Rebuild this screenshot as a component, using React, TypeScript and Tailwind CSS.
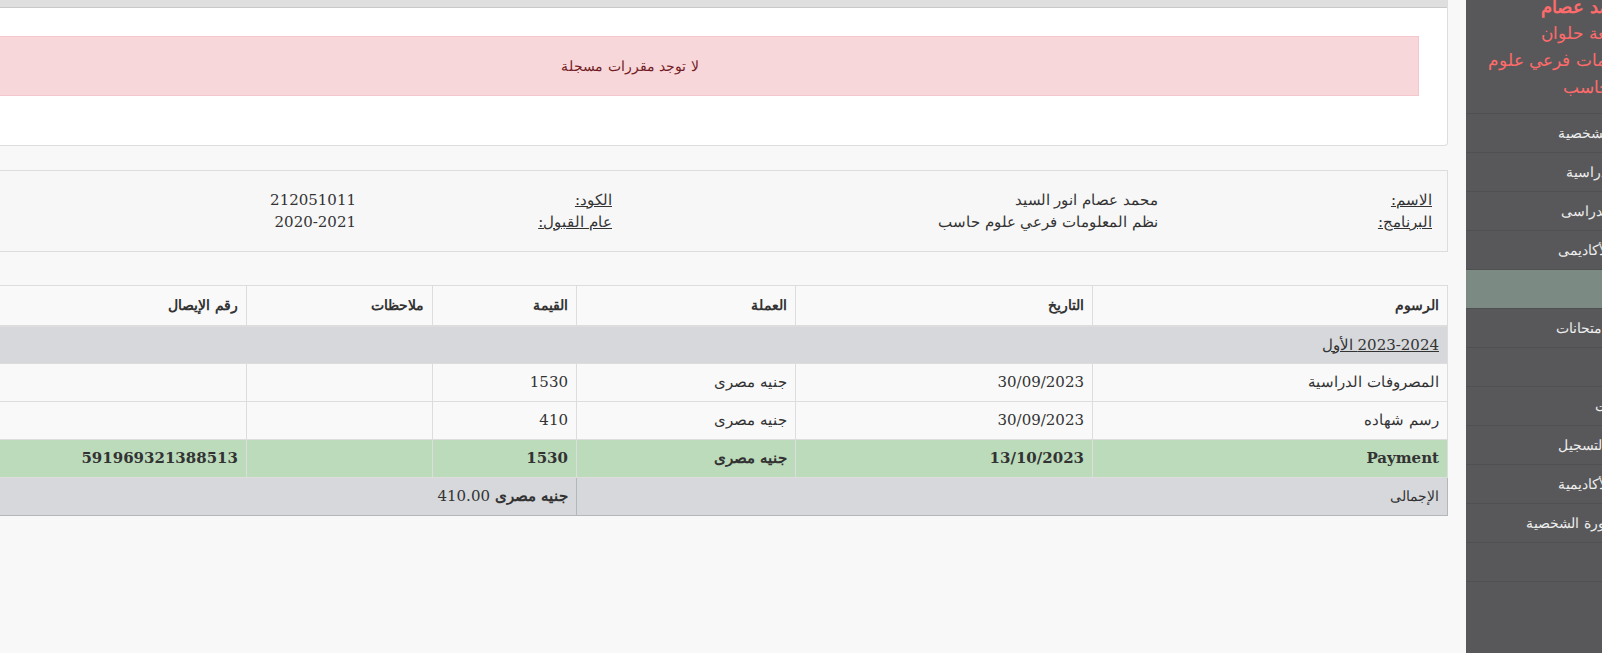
import React from "react";

const menuItems = [
  { label: "البيانات الشخصية" },
  { label: "الخطة الدراسية" },
  { label: "الجدول الدراسى" },
  { label: "الإرشاد الأكاديمى" },
  { label: "المالية", active: true },
  { label: "مواعيد الامتحانات" },
  { label: "الرسائل" },
  { label: "الاستبيانات" },
  { label: "استمارة التسجيل" },
  { label: "الشئون الأكاديمية" },
  { label: "تغيير الصورة الشخصية" },
  { label: "خروج" },
];

type FeeRow = {
  name: string;
  date: string;
  currency: string;
  amount: string;
  notes: string;
  receipt: string;
  payment?: boolean;
};

const feeRows: FeeRow[] = [
  { name: "المصروفات الدراسية", date: "30/09/2023", currency: "جنيه مصرى", amount: "1530", notes: "", receipt: "" },
  { name: "رسم شهاده", date: "30/09/2023", currency: "جنيه مصرى", amount: "410", notes: "", receipt: "" },
  { name: "Payment", date: "13/10/2023", currency: "جنيه مصرى", amount: "1530", notes: "", receipt: "591969321388513", payment: true },
];

function Sidebar() {
  return (
    <aside className="w-[240px] shrink-0 -mr-[104px] bg-[#58585a] text-[#eeeeee] min-h-[653px]">
      <div className="text-center text-[#ff6b6b] text-[17px] leading-[27px] px-3 -mt-[7px] pb-[12px] border-b border-[#4f4f51]">
        <div className="font-bold text-[18px]">محمد عصام</div>
        <div>جامعة حلوان</div>
        <div>نظم المعلومات فرعي علوم حاسب</div>
      </div>
      <ul>
        {menuItems.map((item) => (
          <li
            key={item.label}
            className={
              "h-[39px] flex items-center pr-[50px] text-[14px] border-b border-[#505052] " +
              (item.active ? "bg-[#7b8b84]" : "")
            }
          >
            {item.label}
          </li>
        ))}
      </ul>
    </aside>
  );
}

function InfoPanel() {
  return (
    <div className="mt-[24px] border border-[#dddddd] bg-[#f7f7f7] pr-[15px] py-[18px] text-[15px] leading-[22px] text-[#333]">
      <div className="flex">
        <div className="w-[274px] shrink-0">
          <div className="underline">الاسم:</div>
          <div className="underline">البرنامج:</div>
        </div>
        <div className="w-[546px] shrink-0">
          <div>محمد عصام انور السيد</div>
          <div>نظم المعلومات فرعي علوم حاسب</div>
        </div>
        <div className="w-[256px] shrink-0">
          <div className="underline">الكود:</div>
          <div className="underline">عام القبول:</div>
        </div>
        <div>
          <div>212051011</div>
          <div>2020-2021</div>
        </div>
      </div>
    </div>
  );
}

function FeesTable() {
  return (
    <table className="mt-[33px] w-full table-fixed border-collapse border border-[#dddddd] text-[15px] text-[#333]">
      <colgroup>
        <col className="w-[355px]" />
        <col className="w-[297px]" />
        <col className="w-[219px]" />
        <col className="w-[144px]" />
        <col className="w-[186px]" />
        <col />
      </colgroup>
      <thead>
        <tr className="h-[40px] bg-[#f9f9f9]">
          {["الرسوم", "التاريخ", "العملة", "القيمة", "ملاحظات", "رقم الإيصال"].map((h) => (
            <th key={h} className="px-2 text-right font-bold text-[14px] border border-[#dddddd] border-b-2">
              {h}
            </th>
          ))}
        </tr>
      </thead>
      <tbody>
        <tr className="h-[38px] bg-[#d6d8db]">
          <td colSpan={6} className="px-2 border border-[#dddddd]">
            <span className="underline">2023-2024 الأول</span>
          </td>
        </tr>
        {feeRows.map((r, i) => (
          <tr
            key={i}
            className={"h-[38px] " + (r.payment ? "bg-[#bcdbbb] font-bold" : "bg-[#f9f9f9]")}
          >
            <td className="px-2 border border-[#dddddd]">{r.name}</td>
            <td className="px-2 border border-[#dddddd]">{r.date}</td>
            <td className="px-2 border border-[#dddddd]">{r.currency}</td>
            <td className="px-2 border border-[#dddddd]">{r.amount}</td>
            <td className="px-2 border border-[#dddddd]">{r.notes}</td>
            <td className="px-2 border border-[#dddddd]">{r.receipt}</td>
          </tr>
        ))}
        <tr className="h-[38px] bg-[#d6d8db]">
          <td colSpan={3} className="px-2 text-[14px] border border-[#b3b7bb]">الإجمالى</td>
          <td colSpan={3} className="px-2 border border-[#b3b7bb]">
            <b>جنيه مصرى</b> 410.00
          </td>
        </tr>
      </tbody>
    </table>
  );
}

export default function App() {
  return (
    <div
      dir="rtl"
      className="w-[1602px] h-[653px] overflow-hidden flex bg-[#f8f8f8] font-['DejaVu_Serif',serif]"
    >
      <Sidebar />
      <main className="w-[1636px] shrink-0 mr-[18px]">
        <div className="border border-t-0 border-[#dddddd] rounded-b-[4px] bg-white">
          <div className="h-[8px] bg-[#dfdfdf] border-b border-[#c9c9c9]" />
          <div className="pt-[28px] px-[28px] pb-[49px]">
            <div className="h-[60px] border border-[#f5c6cb] bg-[#f8d7da] text-[#721c24] text-[14px] flex items-center justify-center">
              لا توجد مقررات مسجلة
            </div>
          </div>
        </div>
        <InfoPanel />
        <FeesTable />
      </main>
    </div>
  );
}
